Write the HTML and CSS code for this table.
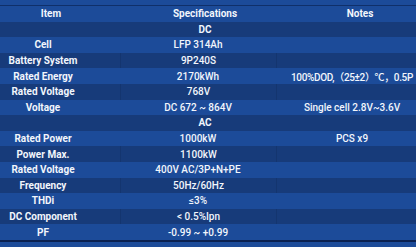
FILE: index.html
```html
<!DOCTYPE html>
<html>
<head>
<meta charset="utf-8">
<link rel="stylesheet" href="styles.css">
</head>
<body>
<div class="sheet">
  <div class="row head">
    <div class="c1">Item</div><div class="c2">Specifications</div><div class="c3">Notes</div>
  </div>
  <div class="row group dark"><div class="span">DC</div></div>
  <div class="row light"><div class="c1">Cell</div><div class="c2">LFP 314Ah</div><div class="c3"></div></div>
  <div class="row dark"><div class="c1">Battery System</div><div class="c2">9P240S</div><div class="c3"></div></div>
  <div class="row light"><div class="c1">Rated Energy</div><div class="c2">2170kWh</div><div class="c3 tight">100%DOD,（25±2）℃，0.5P</div></div>
  <div class="row dark"><div class="c1">Rated Voltage</div><div class="c2">768V</div><div class="c3"></div></div>
  <div class="row light"><div class="c1">Voltage</div><div class="c2">DC 672 ~ 864V</div><div class="c3">Single cell 2.8V~3.6V</div></div>
  <div class="row group dark"><div class="span">AC</div></div>
  <div class="row light"><div class="c1">Rated Power</div><div class="c2">1000kW</div><div class="c3">PCS x9</div></div>
  <div class="row dark"><div class="c1">Power Max.</div><div class="c2">1100kW</div><div class="c3"></div></div>
  <div class="row light"><div class="c1">Rated Voltage</div><div class="c2">400V AC/3P+N+PE</div><div class="c3"></div></div>
  <div class="row dark"><div class="c1">Frequency</div><div class="c2">50Hz/60Hz</div><div class="c3"></div></div>
  <div class="row light"><div class="c1">THDi</div><div class="c2">≤3%</div><div class="c3"></div></div>
  <div class="row dark"><div class="c1">DC Component</div><div class="c2">&lt; 0.5%Ipn</div><div class="c3"></div></div>
  <div class="row light"><div class="c1">PF</div><div class="c2">-0.99 ~ +0.99</div><div class="c3"></div></div>
</div>
</body>
</html>
```
FILE: styles.css
```css
html, body {
  margin: 0;
  padding: 0;
}
body {
  background: #1c4b99;
  width: 416px;
  height: 247px;
  overflow: hidden;
  font-family: Roboto, "Noto Sans CJK SC", sans-serif;
  font-size: 10px;
  font-weight: 500;
  color: #f2f6fc;
}
.sheet {
  margin-top: 5px;
  border-top: 1px solid #10306a;
  border-bottom: 2px solid #0b2150;
}
.row {
  display: grid;
  grid-template-columns: 120px 156px 140px;
  height: 15.6px;
  align-items: center;
  text-align: center;
  white-space: nowrap;
}
.row > div {
  height: 100%;
  display: flex;
  align-items: center;
  justify-content: center;
}
.light { background: #1c4b99; }
.dark { background: #173b7a; }
.head { background: #1c4b99; font-weight: 700; }
.c1 { font-weight: 700; padding-right: 34px; }
.c3 { padding-left: 12px; }
.tight { letter-spacing: -0.35px; }
.dark .c2, .dark .c3 { border-left: 1px solid #14356f; }
.head .c1 { padding-right: 18px; }
.head .c2 { padding-left: 14px; }
.head .c3 { padding-left: 28px; }
.group .span {
  grid-column: 1 / 4;
  font-weight: 700;
  padding-right: 6px;
}
```
